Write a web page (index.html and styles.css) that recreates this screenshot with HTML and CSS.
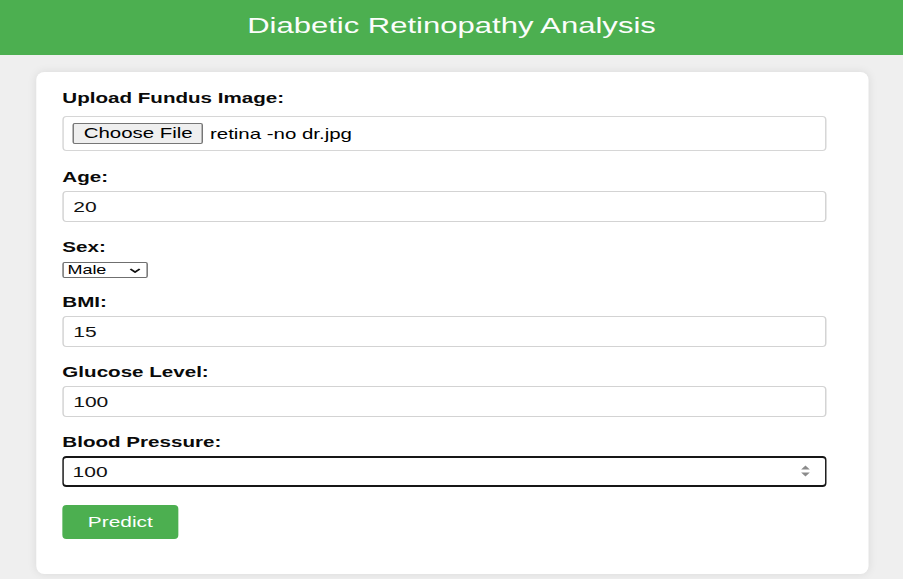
FILE: index.html
```html
<!DOCTYPE html>
<html lang="en">
<head>
<meta charset="utf-8">
<title>Diabetic Retinopathy Analysis</title>
<link rel="stylesheet" href="styles.css">
</head>
<body>
<div class="page">
  <header class="topbar">
    <h1 class="title">Diabetic Retinopathy Analysis</h1>
  </header>
  <main class="card">
    <form class="form">
      <label class="label">Upload Fundus Image:</label>
      <div class="file-box">
        <span class="file-btn">Choose File</span>
        <span class="file-name">retina -no dr.jpg</span>
      </div>

      <label class="label">Age:</label>
      <input class="field" type="text" value="20">

      <label class="label">Sex:</label>
      <div class="select-wrap">
        <select class="select">
          <option>Male</option>
          <option>Female</option>
        </select>
        <svg class="chev" width="9" height="6" viewBox="0 0 9 6"><path d="M1 1 L4.5 4.5 L8 1" fill="none" stroke="#111" stroke-width="1.6"/></svg>
      </div>

      <label class="label">BMI:</label>
      <input class="field" type="text" value="15">

      <label class="label">Glucose Level:</label>
      <input class="field" type="text" value="100">

      <label class="label">Blood Pressure:</label>
      <div class="spin-wrap">
        <input class="field field-active" type="text" value="100">
        <svg class="spin" width="7" height="14" viewBox="0 0 7 14"><path d="M3.5 1.5 L6.5 5.5 L0.5 5.5 Z" fill="#8b8b8b"/><path d="M0.5 8.5 L6.5 8.5 L3.5 12.5 Z" fill="#8b8b8b"/></svg>
      </div>

      <button class="predict" type="button">Predict</button>
    </form>
  </main>
</div>
</body>
</html>
```

FILE: styles.css
```css
html, body {
  margin: 0;
  padding: 0;
  overflow: hidden;
  background: #efefef;
  font-family: "Liberation Sans", Arial, sans-serif;
  color: #111;
}

/* The reference is rendered with a horizontal stretch of 1.45 */
.page {
  width: 622.76px;
  height: 579px;
  transform: scaleX(1.45);
  transform-origin: 0 0;
}

.topbar {
  background: #4caf50;
  height: 55px;
  box-sizing: border-box;
  padding: 14px 0 17px;
}

.title {
  margin: 0;
  text-align: center;
  color: #fbfdfb;
  font-size: 21.4px;
  line-height: 24px;
  font-weight: normal;
}

.card {
  display: block;
  margin: 17px 24px 0 25px;
  background: #fff;
  border-radius: 5.5px / 8px;
  box-shadow: 0 0 8px rgba(0, 0, 0, 0.09);
  padding: 18px 29px 35px 18px;
}

.form {
  display: flex;
  flex-direction: column;
  align-items: stretch;
}

.label {
  display: block;
  font-weight: bold;
  font-size: 14.2px;
  line-height: 17px;
  margin-bottom: 5px;
  color: #0a0a0a;
}

.file-box {
  box-sizing: border-box;
  height: 35px;
  margin-top: 4px;
  margin-bottom: 18px;
  border: 1px solid #d6d6d6;
  border-radius: 2.8px / 4px;
  padding: 6px 6.3px;
  display: flex;
  align-items: center;
  font-size: 14.1px;
}

.file-btn {
  box-sizing: border-box;
  height: 21px;
  line-height: 17px;
  padding: 1px 6.4px;
  background: #efefef;
  border: 1px solid #767676;
  border-radius: 1.5px / 2px;
  color: #000;
}

.file-name {
  margin-left: 4.5px;
  color: #000;
}

.field {
  box-sizing: border-box;
  width: 100%;
  height: 31px;
  margin: 0 0 17px;
  padding: 6px 6.5px;
  border: 1px solid #d3d3d3;
  border-radius: 2.8px / 4px;
  font-family: inherit;
  font-size: 14.5px;
  line-height: 17px;
  color: #111;
  background: #fff;
  outline: none;
}

.field-active {
  border: 2px solid #161616;
  border-left-width: 1.5px;
  border-right-width: 1.5px;
  padding-left: 6px;
  margin-bottom: 18px;
}

.select-wrap {
  position: relative;
  width: 59.3px;
  height: 16px;
  margin-top: 1px;
  margin-bottom: 16px;
}

.select {
  display: block;
  appearance: none;
  -webkit-appearance: none;
  box-sizing: border-box;
  width: 100%;
  height: 16px;
  margin: 0;
  padding: 0 0 0 2.5px;
  border: 1px solid #6f6f6f;
  border-radius: 1.5px / 2px;
  background: #fff;
  font-family: inherit;
  font-size: 12.4px;
  line-height: 14px;
  color: #000;
}

.chev {
  position: absolute;
  right: 5px;
  top: 5.5px;
  width: 8.3px;
  height: 5.5px;
}

.spin-wrap {
  position: relative;
}

.spin {
  position: absolute;
  right: 11px;
  top: 8px;
  width: 7px;
  height: 14px;
}

.predict {
  align-self: flex-start;
  box-sizing: border-box;
  width: 80px;
  height: 34px;
  border: none;
  border-radius: 2.8px / 4px;
  background: #4caf50;
  color: #fff;
  font-family: inherit;
  font-size: 14.4px;
  padding: 0;
  cursor: pointer;
}
```
